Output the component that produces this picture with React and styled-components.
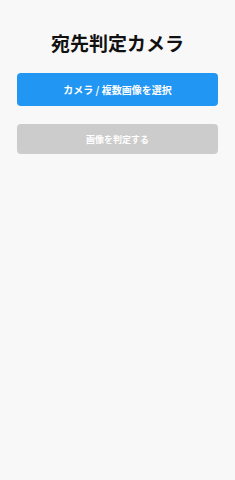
import React from "react";
import styled, { createGlobalStyle } from "styled-components";

const GlobalStyle = createGlobalStyle`
  html, body {
    margin: 0;
    padding: 0;
    background-color: #f8f8f8;
  }
  body {
    font-family: "Noto Sans CJK JP", "Noto Sans", sans-serif;
  }
`;

const Page = styled.div`
  min-height: 480px;
  padding: 30px 17px 0;
  display: flex;
  flex-direction: column;
  box-sizing: border-box;
`;

const Title = styled.h1`
  margin: 0 0 17px;
  font-size: 19px;
  line-height: 26px;
  font-weight: 700;
  color: #111111;
  text-align: center;
`;

const Button = styled.button`
  display: flex;
  align-items: center;
  justify-content: center;
  width: 100%;
  height: ${(p) => p.$height}px;
  margin-bottom: ${(p) => p.$gap || 0}px;
  border: none;
  border-radius: 4px;
  background-color: ${(p) => (p.disabled ? "#cccccc" : "#2196f3")};
  color: #ffffff;
  font-family: inherit;
  font-size: ${(p) => p.$size}px;
  font-weight: 700;
  cursor: ${(p) => (p.disabled ? "default" : "pointer")};
`;

const App = () => {
  return (
    <>
      <GlobalStyle />
      <Page>
        <Title>宛先判定カメラ</Title>
        <Button $height={33} $gap={18} $size={10}>
          カメラ / 複数画像を選択
        </Button>
        <Button $height={30} $size={9} disabled>
          画像を判定する
        </Button>
      </Page>
    </>
  );
};

export default App;
